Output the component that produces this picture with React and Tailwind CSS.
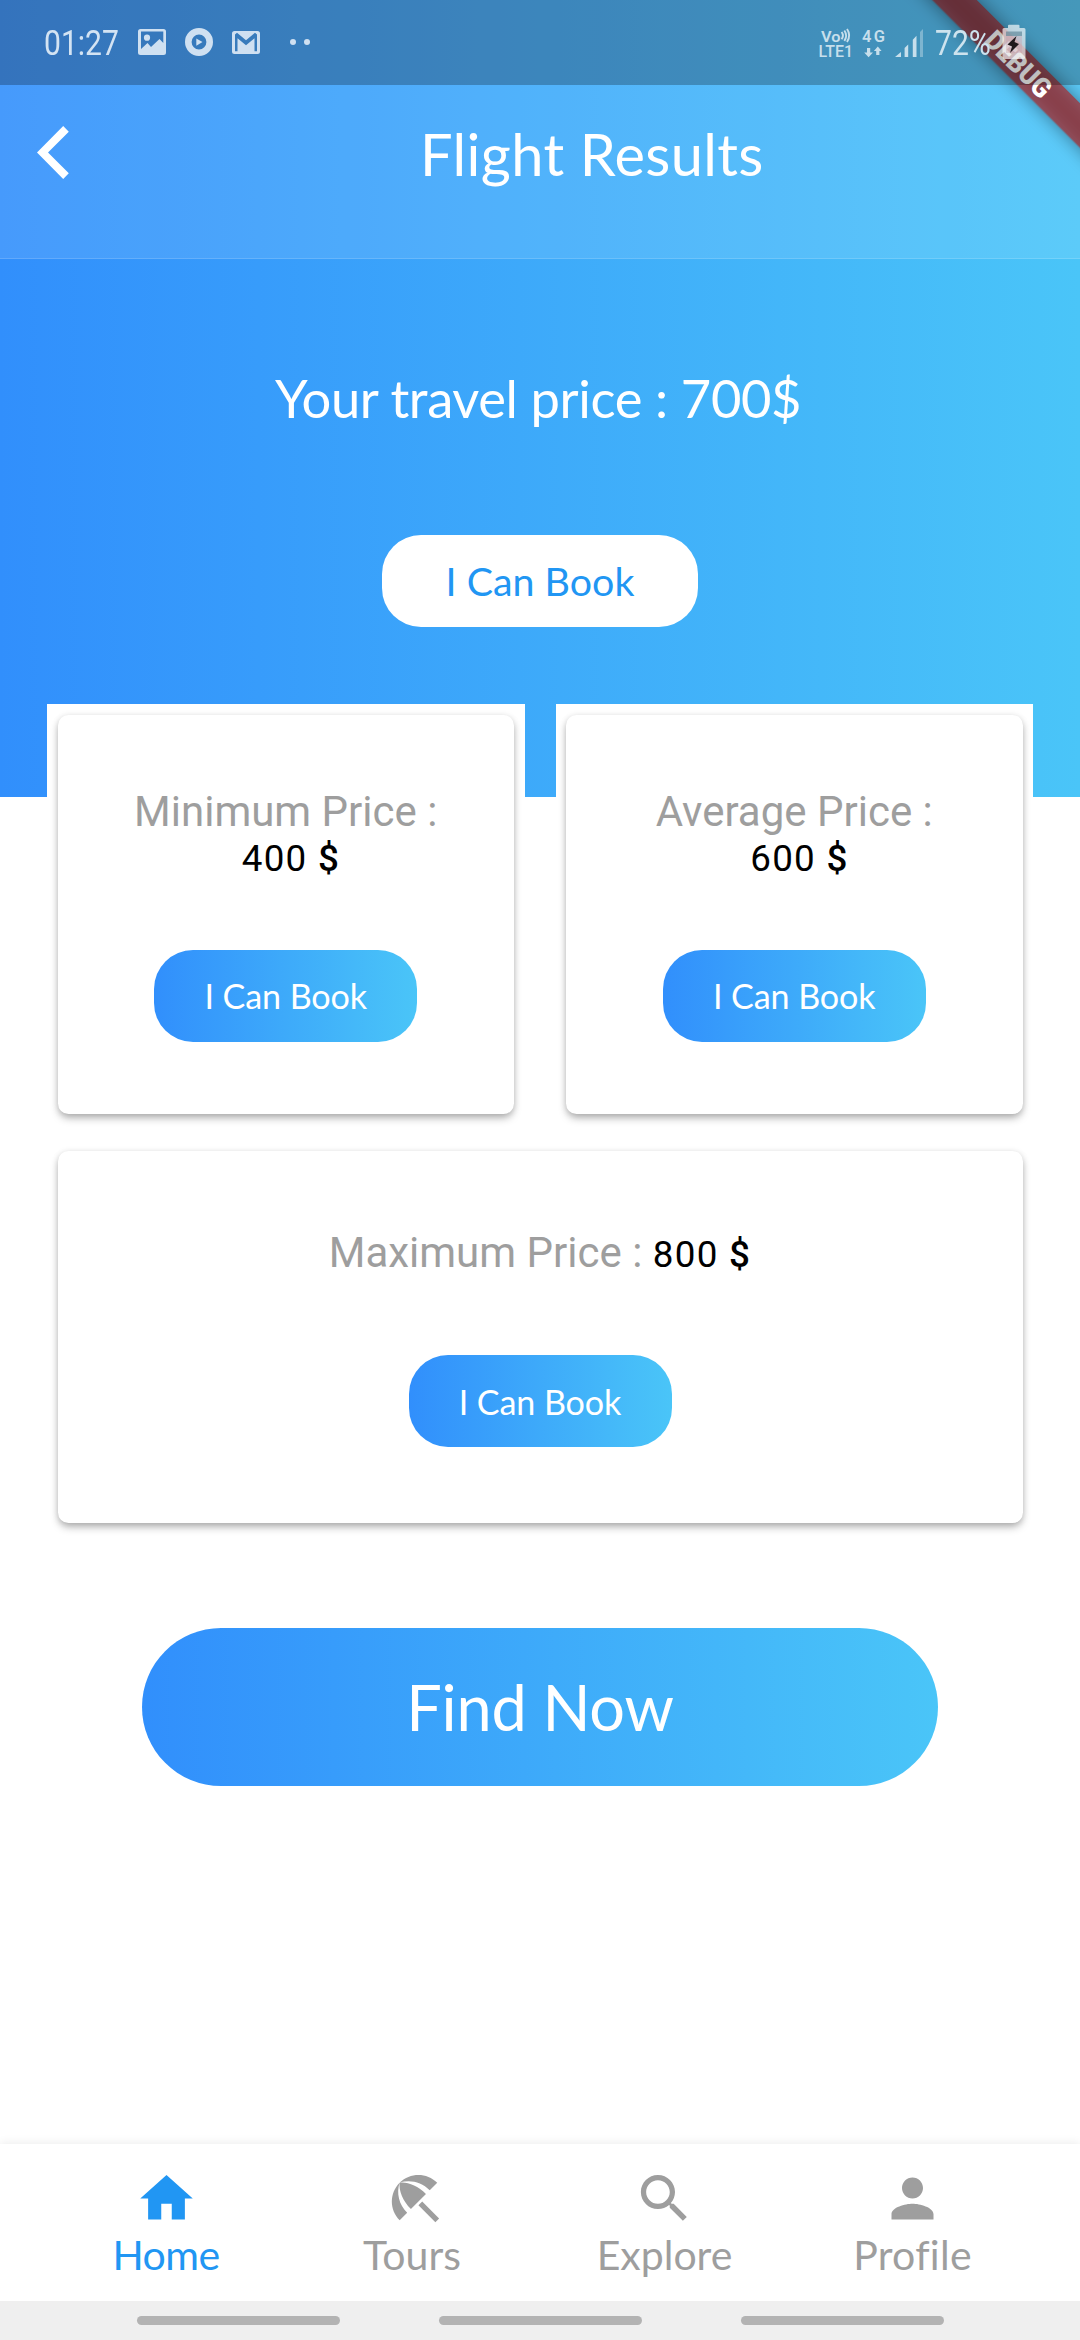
import React from "react";

const GRADIENT = "bg-linear-to-r/srgb from-[#318ffc] to-[#4ac5f8]";

function PictureIcon() {
  return (
    <svg className="h-7 w-7" viewBox="0 0 28 28" fill="#cfe0f1">
      <path
        fillRule="evenodd"
        d="M2.500 1h23A2.500 2.500 0 0 1 28 3.500v21a2.500 2.500 0 0 1-2.500 2.500h-23A2.500 2.500 0 0 1 0 24.500v-21A2.500 2.500 0 0 1 2.500 1zM3 3.500V21l6.500-6 3.500 4 8.500-8L25.300 15V3.500z"
      />
      <circle cx="9" cy="9.700" r="3.100" />
    </svg>
  );
}

function PlayIcon() {
  return (
    <svg className="h-7 w-7" viewBox="0 0 28 28" fill="#cfe0f1">
      <circle cx="14" cy="14" r="10.700" fill="none" stroke="#cfe0f1" strokeWidth="6.600" />
      <path d="M11.300 10.400v7.400l6.200-3.700z" />
    </svg>
  );
}

function MailIcon() {
  return (
    <svg className="h-7 w-7" viewBox="0 0 28 28" fill="#cfe0f1">
      <path
        fillRule="evenodd"
        d="M2.500 3h23A2.500 2.500 0 0 1 28 5.500v18a2.500 2.500 0 0 1-2.500 2.500h-23A2.500 2.500 0 0 1 0 23.500v-18A2.500 2.500 0 0 1 2.500 3zM3 6.500v16.800h2.500V10.200l8.500 7.100 8.500-7.100v13.100H25V6.500l-2-1.800-9 7.500-9-7.500z"
      />
    </svg>
  );
}

function NetworkIcons() {
  return (
    <svg className="h-[34px] w-[108px]" viewBox="818 26 108 34" fill="#c7dfec" fontFamily="Roboto, sans-serif" fontWeight="600">
      <text x="821" y="41.500" fontSize="15.500" textLength="19.500" lengthAdjust="spacingAndGlyphs">Vo</text>
      <g fill="none" stroke="#c7dfec" strokeWidth="1.900">
        <path d="M841.600 32q2.600 3.500 0 7.200" />
        <path d="M844.300 30.500q3.600 5 0 10.400" />
        <path d="M847 29q4.400 6.300 0 13" />
      </g>
      <text x="818.500" y="56.700" fontSize="16.500" fontWeight="500" textLength="34.500" lengthAdjust="spacingAndGlyphs">LTE1</text>
      <text x="862" y="42.300" fontSize="16.500" textLength="23" lengthAdjust="spacing">4G</text>
      <path d="M867 48h3.200v4.500h2.800l-4.400 4.700-4.400-4.700h2.800zM876.200 55h3.200v-4h2.200l-3.800-4.600-3.900 4.600h2.300z" />
      <path d="M895 57l6-5v5zM904.600 57V48l3.600-3.500V57zM912.800 57V39.800l3.700-4V57z" />
      <path opacity=".45" d="M920 57V32l3-3v28z" />
    </svg>
  );
}

function BatteryIcon() {
  return (
    <svg className="h-9 w-6" viewBox="0 0 24 36">
      <path d="M7 .800h9.500a1 1 0 0 1 1 1V4H22a1.500 1.500 0 0 1 1.500 1.500v27A2.500 2.500 0 0 1 21 35H3A2.500 2.500 0 0 1 .500 32.500v-27A1.500 1.500 0 0 1 2 4h4V1.800a1 1 0 0 1 1-1z" fill="#fff" opacity=".66" />
      <path d="M4 7.500h16v4.500H4z" fill="#5c8496" opacity=".65" />
      <path d="M4 12h16v17H4z" fill="#c99ba8" opacity=".35" />
      <path d="M14.500 12L5.500 20.500l4.500 2-2 6.500 9-9-4.500-2z" fill="#20191c" />
    </svg>
  );
}

function DebugBanner() {
  return (
    <svg className="absolute top-0 right-0 h-[190px] w-[190px]" viewBox="890 0 190 190">
      <g transform="rotate(45 1017.200 62.800)">
        <rect x="890" y="47" width="260" height="31.500" fill="#b71c1c" fillOpacity=".63" style={{ filter: "drop-shadow(0 0 9px rgba(0,0,0,.65))" }} />
        <text x="978" y="72.600" fontFamily="Roboto, sans-serif" fontWeight="900" fontSize="27.500" textLength="82" lengthAdjust="spacingAndGlyphs" fill="#fff">
          DEBUG
        </text>
      </g>
    </svg>
  );
}

function StatusBar() {
  return (
    <div className="relative flex h-[85px] items-start bg-black/25 font-[Roboto,sans-serif] text-[35px] leading-[41px]">
      <span className="mt-[23px] ml-11 w-[94px] origin-left scale-x-[.86] text-[#d3e3f3]">01:27</span>
      <div className="mt-7 flex gap-[19px]">
        <PictureIcon />
        <PlayIcon />
        <MailIcon />
      </div>
      <div className="mt-[39px] ml-[30px] flex gap-2">
        <i className="size-1.5 rounded-full bg-[#cfe0f1]" />
        <i className="size-1.5 rounded-full bg-[#cfe0f1]" />
      </div>
      <div className="mt-[26px] ml-[508px]">
        <NetworkIcons />
      </div>
      <span className="mt-[23px] ml-[9px] w-[67px] origin-left scale-x-[.86] text-[#cde3ee]">72%</span>
      <div className="mt-6">
        <BatteryIcon />
      </div>
    </div>
  );
}

function Header() {
  return (
    <header className={`h-[797px] ${GRADIENT}`}>
      <div className="relative h-[259px] overflow-hidden border-b border-white/15 bg-white/10">
        <DebugBanner />
        <StatusBar />
        <div className="flex">
          <svg className="mt-[41px] ml-[37px] h-[53px] w-8" viewBox="0 0 32 53" fill="#fff">
            <path d="M26.200 0L0 26.400 26.200 53l5.600-5.700L11 26.400 31.800 5.700z" />
          </svg>
          <h1 className="ml-[351px] text-[57.75px] leading-[137px] tracking-[.39px] text-white">Flight Results</h1>
        </div>
      </div>
      <div className="flex flex-col items-center pt-[107px]">
        <p className="mr-1 text-[52.5px] leading-[63px] tracking-[-.4px] text-white">Your travel price : 700$</p>
        <button className="mt-[106px] h-[92px] w-[316px] rounded-[39px] bg-white text-[39.375px] text-[#2196f3]">I Can Book</button>
      </div>
    </header>
  );
}

function BookButton({ className }) {
  return (
    <button className={`h-[92px] w-[263px] rounded-[39px] pt-px font-[Lato,sans-serif] text-[34.125px] tracking-[-.1px] text-white ${GRADIENT} ${className}`}>
      I Can Book
    </button>
  );
}

const CARD =
  "flex flex-col items-center rounded-[10.5px] bg-white shadow-[0_5px_9px_-1px_rgba(0,0,0,0.28),0_1px_6px_rgba(0,0,0,0.13)]";
const LABEL = "text-[42px] leading-[49px] text-[#9e9e9e]";
const AMOUNT = "whitespace-pre text-[36.75px] tracking-[1.31px] text-black";

function Amount({ value }) {
  return (
    <>
      {` ${value} `}
      <span className="font-medium">$</span>
    </>
  );
}

function PriceCard({ label, value }) {
  return (
    <div className="bg-white p-[10.5px]">
      <div className={`h-[399px] pt-[72px] ${CARD}`}>
        <p className={LABEL}>{label}</p>
        <p className={`leading-[45px] ${AMOUNT}`}>
          <Amount value={value} />
        </p>
        <BookButton className="mt-[69px]" />
      </div>
    </div>
  );
}

const TABS = [
  { name: "Home", place: "ml-[110px] w-[112px] tracking-[-.6px] text-[#2196f3]", path: "M10 20v-6h4v6h5v-8h3L12 3 2 12h3v8z" },
  {
    name: "Tours",
    place: "ml-[140px] w-[100px] text-[#9e9e9e]",
    shift: "translate-x-[3px]",
    path: "M13.127 14.560l1.430-1.430 6.440 6.443L19.570 21zm4.293-5.730l2.860-2.860c-3.950-3.950-10.350-3.960-14.300-.020 3.930-1.300 8.310-.250 11.440 2.880zM5.950 5.980c-3.940 3.950-3.930 10.350.020 14.300l2.860-2.860C5.700 14.290 4.650 9.910 5.950 5.980zm.020-.020l-.010.010c-.380 3.010 1.170 6.880 4.300 10.020l5.730-5.730c-3.130-3.130-7.010-4.680-10.020-4.300z",
  },
  {
    name: "Explore",
    place: "ml-[133px] w-[139px] text-[#9e9e9e]",
    path: "M15.500 14h-.790l-.280-.270C15.410 12.590 16 11.110 16 9.500 16 5.910 13.090 3 9.500 3S3 5.910 3 9.500 5.910 16 9.500 16c1.610 0 3.090-.590 4.230-1.570l.270.280v.790l5 4.990L20.490 19l-4.990-5zm-6 0C7.010 14 5 11.990 5 9.500S7.010 5 9.500 5 14 7.010 14 9.500 11.990 14 9.500 14z",
  },
  {
    name: "Profile",
    place: "ml-[119px] w-[119px] tracking-[.3px] text-[#9e9e9e]",
    path: "M12 12c2.210 0 4-1.790 4-4s-1.790-4-4-4-4 1.790-4 4 1.790 4 4 4zm0 2c-2.670 0-8 1.340-8 4v2h16v-2c0-2.660-5.330-4-8-4z",
  },
];

function TabBar() {
  return (
    <nav className="flex h-[157px] bg-white pt-[23px] shadow-[0_-1px_9px_rgba(0,0,0,0.08)]">
      {TABS.map((tab) => (
        <div key={tab.name} className={`flex flex-col items-center text-[41px] leading-[50px] ${tab.place}`}>
          <svg className={`h-[63px] w-[63px] ${tab.shift ?? ""}`} viewBox="0 0 24 24" fill="currentColor">
            <path d={tab.path} />
          </svg>
          <span>{tab.name}</span>
        </div>
      ))}
    </nav>
  );
}

export default function App() {
  return (
    <div className="flex h-[2340px] w-[1080px] flex-col overflow-hidden bg-white font-[Lato,sans-serif]">
      <Header />
      <main className="relative -mt-[93px] flex-1 px-[47px] font-[Roboto,sans-serif]">
        <div className="grid grid-cols-2 gap-[31px]">
          <PriceCard label="Minimum Price :" value="400" />
          <PriceCard label="Average Price :" value="600" />
        </div>
        <div className={`mx-[10.5px] mt-[27px] h-[372px] pt-[77px] ${CARD}`}>
          <p className={LABEL}>
            Maximum Price :
            <span className={AMOUNT}>
              <Amount value="800" />
            </span>
          </p>
          <BookButton className="mt-[76px]" />
        </div>
        <div className="mt-[105px] flex justify-center">
          <button className={`h-[158px] w-[796px] rounded-[79px] font-[Lato,sans-serif] text-[63px] tracking-[-.2px] text-white ${GRADIENT}`}>
            Find Now
          </button>
        </div>
      </main>
      <TabBar />
      <div className="relative flex h-[39px] justify-center gap-[99px] bg-[#efefef] pt-[15px]">
        <i className="h-[9px] w-[203px] rounded-full bg-[#b3b3b3]" />
        <i className="h-[9px] w-[203px] rounded-full bg-[#b3b3b3]" />
        <i className="h-[9px] w-[203px] rounded-full bg-[#b3b3b3]" />
      </div>
    </div>
  );
}
